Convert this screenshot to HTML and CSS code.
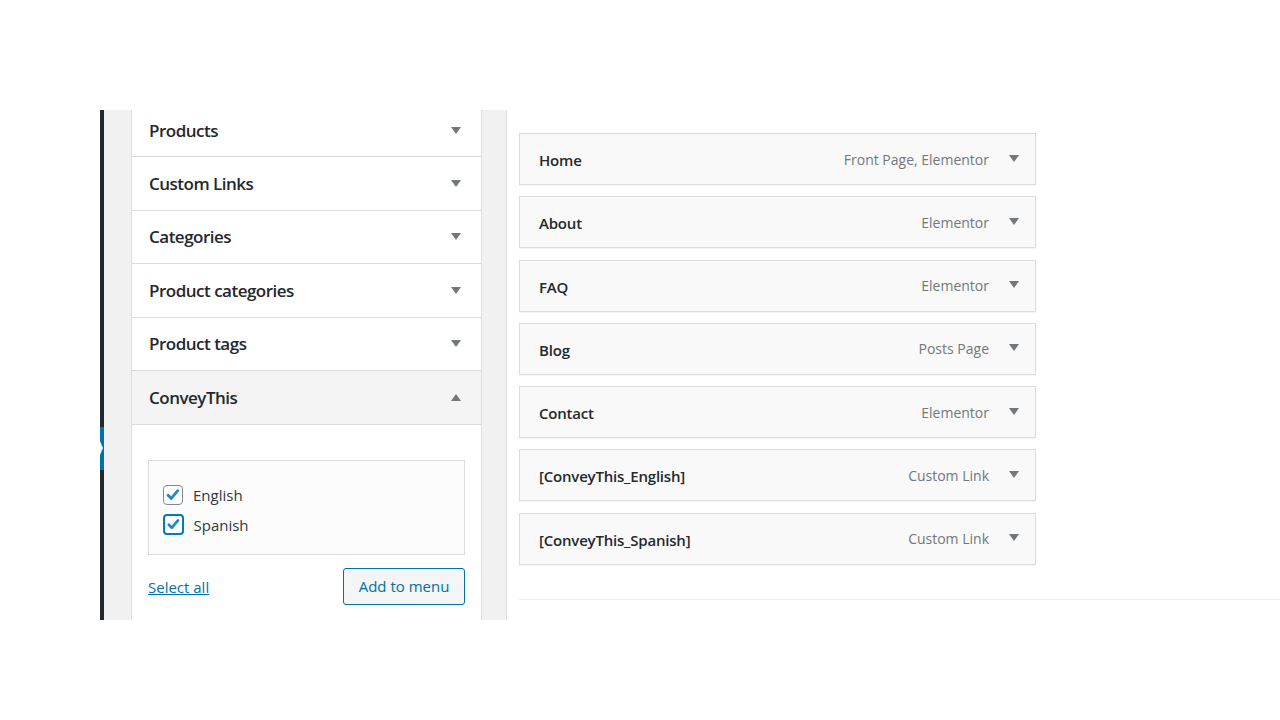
FILE: index.html
```html
<!DOCTYPE html>
<html lang="en">

<head>
  <meta charset="UTF-8">
  <meta name="viewport" content="width=device-width, initial-scale=1.0">
  <title>Menus</title>
  <link rel="stylesheet" href="styles.css">
</head>

<body>

  <div class="screen">
    <div class="adminbar">
      <div class="current"></div>
    </div>
    <div class="gutter"></div>

    <div class="accordion">
      <div class="section first">
        <h3>Products</h3>
        <span class="arrow"></span>
      </div>
      <div class="section">
        <h3>Custom Links</h3>
        <span class="arrow"></span>
      </div>
      <div class="section">
        <h3>Categories</h3>
        <span class="arrow"></span>
      </div>
      <div class="section">
        <h3>Product categories</h3>
        <span class="arrow"></span>
      </div>
      <div class="section">
        <h3>Product tags</h3>
        <span class="arrow"></span>
      </div>
      <div class="section open">
        <h3>ConveyThis</h3>
        <span class="arrow up"></span>
      </div>
      <div class="section-content">
        <div class="checklist">
          <label class="check-row">
            <span class="checkbox"><svg viewBox="0 0 20 20"><path d="M4.5 10.2l3.6 3.6 7.2-8.6" /></svg></span>
            English
          </label>
          <label class="check-row">
            <span class="checkbox focus"><svg viewBox="0 0 20 20"><path d="M4.5 10.2l3.6 3.6 7.2-8.6" /></svg></span>
            Spanish
          </label>
        </div>
        <div class="actions">
          <a href="#" class="select-all">Select all</a>
          <button class="add-button">Add to menu</button>
        </div>
      </div>
    </div>

    <div class="gutter right"></div>

    <div class="menu-area">
      <ul class="menu">
        <li class="menu-item"><span class="title">Home</span><span class="type">Front Page, Elementor</span><span class="arrow"></span></li>
        <li class="menu-item"><span class="title">About</span><span class="type">Elementor</span><span class="arrow"></span></li>
        <li class="menu-item"><span class="title">FAQ</span><span class="type">Elementor</span><span class="arrow"></span></li>
        <li class="menu-item"><span class="title">Blog</span><span class="type">Posts Page</span><span class="arrow"></span></li>
        <li class="menu-item"><span class="title">Contact</span><span class="type">Elementor</span><span class="arrow"></span></li>
        <li class="menu-item"><span class="title">[ConveyThis_English]</span><span class="type">Custom Link</span><span class="arrow"></span></li>
        <li class="menu-item"><span class="title">[ConveyThis_Spanish]</span><span class="type">Custom Link</span><span class="arrow"></span></li>
      </ul>
      <div class="menu-footer"></div>
    </div>
  </div>

</body>

</html>
```

FILE: styles.css
```css
body {
  margin: 0;
  background: white;
  font-family: "Open Sans", "Noto Sans", sans-serif;
  color: #23282d;
}

.screen {
  display: flex;
  height: 510px;
  margin-top: 110px;
  margin-left: 100px;
  overflow: hidden;
}

.adminbar {
  width: 4px;
  background-color: #23282d;
  position: relative;
}

.current {
  position: absolute;
  top: 317px;
  left: 0;
  width: 4px;
  height: 43px;
  background-color: #0073aa;
}

.current:after {
  content: "";
  position: absolute;
  top: 14px;
  left: 0;
  border-top: 7px solid transparent;
  border-bottom: 7px solid transparent;
  border-left: 3px solid #f1f1f1;
}

.gutter {
  width: 27px;
  background-color: #f1f1f1;
}

.gutter.right {
  width: 24px;
  border-right: 1px solid #dcdcde;
}

.accordion {
  width: 349px;
  border-left: 1px solid #dcdcde;
  border-right: 1px solid #dcdcde;
  background: white;
}

.section {
  display: flex;
  align-items: center;
  justify-content: space-between;
  height: 53.5px;
  padding: 0 20px 0 17px;
  border-bottom: 1px solid #dcdcde;
  box-sizing: border-box;
}

.section.first {
  height: 47px;
  padding-bottom: 6px;
}

.section h3 {
  margin: 0;
  font-size: 17px;
  font-weight: 600;
  color: #23282d;
  letter-spacing: -0.5px;
}

.section.open {
  background-color: #f4f4f4;
}

.arrow {
  width: 0;
  height: 0;
  border-left: 5px solid transparent;
  border-right: 5px solid transparent;
  border-top: 7px solid #72777c;
}

.arrow.up {
  border-top: none;
  border-bottom: 7px solid #72777c;
}

.section-content {
  padding: 35px 16px 0 16px;
}

.checklist {
  border: 1px solid #dcdcde;
  background-color: #fcfcfc;
  height: 95px;
  padding: 19px 14px 0 14px;
  box-sizing: border-box;
}

.check-row {
  display: flex;
  align-items: center;
  gap: 10px;
  height: 30px;
  font-size: 15px;
  color: #32373c;
}

.checkbox {
  width: 18px;
  height: 18px;
  border: 1px solid #7e8993;
  border-radius: 4px;
  background: white;
  display: flex;
}

.checkbox.focus {
  width: 17px;
  height: 17px;
  border: 2px solid #007cba;
  margin-left: -0.5px;
}

.checkbox svg {
  width: 100%;
  height: 100%;
}

.checkbox path {
  fill: none;
  stroke: #1e8cbe;
  stroke-width: 3.2;
  stroke-linecap: round;
  stroke-linejoin: round;
}

.actions {
  display: flex;
  justify-content: space-between;
  align-items: center;
  margin-top: 13px;
}

.select-all {
  font-size: 15px;
  color: #0073aa;
  text-decoration: underline;
  margin-top: 2px;
}

.add-button {
  height: 37px;
  width: 122px;
  font-family: inherit;
  font-size: 15px;
  color: #0071a1;
  background-color: #f3f5f6;
  border: 1px solid #0071a1;
  border-radius: 3px;
  padding: 0;
}

.menu-area {
  flex: 1;
  padding: 23px 0 0 12px;
  background: white;
}

.menu {
  list-style: none;
  margin: 0;
  padding: 0;
  width: 517px;
}

.menu-item {
  display: flex;
  align-items: center;
  height: 52px;
  margin-bottom: 11.3px;
  padding: 0 16px 0 19px;
  border: 1px solid #dcdcde;
  background-color: #f9f9f9;
  box-shadow: 0 1px 1px rgba(0, 0, 0, 0.04);
  box-sizing: border-box;
}

.menu-item .title {
  flex: 1;
  font-size: 15px;
  font-weight: 600;
  color: #23282d;
  letter-spacing: -0.2px;
  margin-top: 2px;
}

.menu-item .type {
  font-size: 14px;
  color: #72777c;
  margin-right: 20px;
}

.menu-item .arrow {
  margin-top: -2px;
}

.menu-footer {
  border-top: 1px solid #eee;
  margin-top: 34px;
}
```
